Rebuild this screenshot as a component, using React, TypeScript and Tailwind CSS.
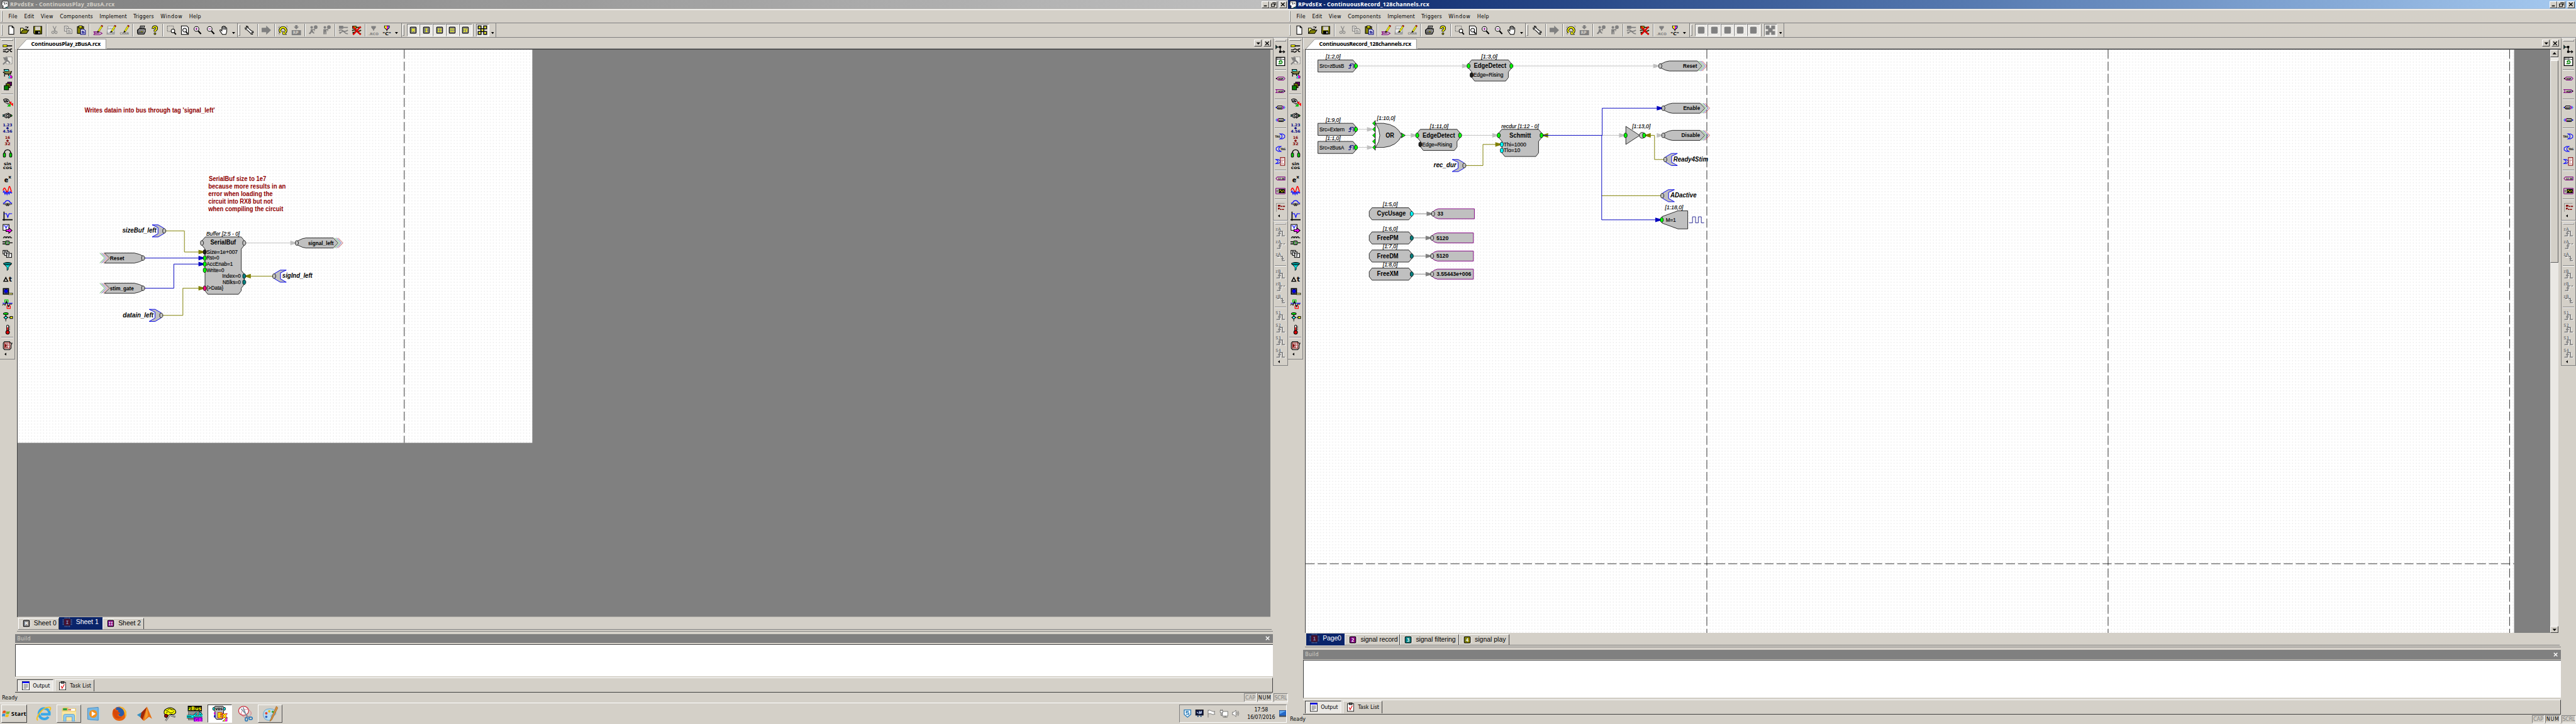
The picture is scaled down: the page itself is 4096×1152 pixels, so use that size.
import React from "react";

/* ---------- text ---------- */

const UI = '"DejaVu Sans Condensed", "DejaVu Sans", sans-serif';
const UI_BOLD = '"Noto Sans", "DejaVu Sans Condensed", sans-serif';
const ARIAL = '"Liberation Sans", Arial, sans-serif';
let ctx: CanvasRenderingContext2D | null = null;

function spacingFor(text: string, width: number, font: string) {
  if (!ctx) ctx = document.createElement("canvas").getContext("2d");
  if (!ctx) return 0;
  ctx.font = font;
  return (width - ctx.measureText(text).width) / text.length;
}

/* One line of interface text set to a given advance width. */
function Label({ t, w, size = 11, bold = false, arial = false, cls = "" }: { t: string; w: number; size?: number; bold?: boolean; arial?: boolean; cls?: string }) {
  const family = arial ? ARIAL : bold ? UI_BOLD : UI;
  const ls = spacingFor(t, w, `${bold ? "bold " : ""}${size}px ${family}`);
  return (
    <span
      className={`inline-block whitespace-pre leading-none ${bold ? "font-bold" : ""} ${cls}`}
      style={{ width: w + 2, marginRight: -2, letterSpacing: ls, fontSize: size, fontFamily: family }}
    >
      {t}
    </span>
  );
}

/* ---------- icons ---------- */

type Kids = { children?: React.ReactNode };

function Ico({ children, s = 20 }: Kids & { s?: number }) {
  return (
    <svg width={s} height={s} viewBox="0 0 20 20" fill="none" stroke="#000" strokeWidth="1.3" className="block shrink-0 overflow-visible">
      {children}
    </svg>
  );
}

function Tiny({ x, y, t, c = "#000", s = 7, w }: { x: number; y: number; t: string; c?: string; s?: number; w?: number }) {
  return (
    <text x={x} y={y} fontSize={s} fontWeight="bold" fill={c} stroke="none" textAnchor="middle" fontFamily='"DejaVu Sans", sans-serif' textLength={w} lengthAdjust="spacingAndGlyphs">
      {t}
    </text>
  );
}

const Pencil = () => (
  <g>
    <path d="M9 14 L10 11 L16 1.5 L18.5 3 L12 13 Z" fill="#ffff00" stroke="#404000" strokeWidth="0.8" />
    <path d="M16 1.5 L17 0 L19.6 1.6 L18.5 3 Z" fill="#900000" stroke="#900000" strokeWidth="0.8" />
    <path d="M9 14 L9.6 12.2 L11 13 Z" fill="#000" />
  </g>
);

const Balloon = ({ run }: { run?: boolean }) => (
  <g stroke="none" fill="#808080">
    <circle cx="7" cy="4.5" r="2.6" />
    <circle cx="15" cy="4" r="3.6" />
    <path d={run ? "M5 8 H10 L13 7 V9 L9 10 L10 13 L13 16 L11 17 L7 14 L4 18 L1 17 L5 12 Z" : "M4 8 H10 L13 7 V9 L10 10 V18 H8 V13 H7 V18 H4 Z"} />
    <path d="M13.5 8 L12 12" stroke="#808080" />
  </g>
);

const Devices = ({ c, y }: { c: string; y: string }) => (
  <g stroke={c} strokeWidth="2">
    <rect x="2" y="2" width="7" height="4.5" fill={y} strokeWidth="1.4" />
    <path d="M9 4.5 H19 M1 11 Q5 8 9 11 T19 10 M3 17 Q8 10 12 14 T19 17 M3 13 V17" />
  </g>
);

const H = {
  new: <path d="M5 1.5 H11.5 L15 5 V18 H5 Z M11.5 1.5 V5 H15" fill="#fff" />,
  open: (
    <g>
      <path d="M2 16.5 V6 H7 L8.5 8 H14 V10" fill="#ffff80" />
      <path d="M2 16.5 L6 10 H18.5 L14 16.5 Z" fill="#808000" />
      <path d="M11 4 Q14 1.5 16.5 5 M16.8 2.5 V5.5 H14" strokeWidth="1.2" />
    </g>
  ),
  save: (
    <g>
      <path d="M2 2.5 H18 V17.5 H3.5 L2 16 Z" fill="#808000" />
      <rect x="5" y="3" width="10" height="7" fill="#d4d0c8" stroke="none" />
      <rect x="5.5" y="12" width="9" height="5.5" fill="#000" />
      <rect x="11.5" y="13" width="2" height="3.5" fill="#fff" stroke="none" />
    </g>
  ),
  cut: (
    <g stroke="#808080">
      <path d="M6.5 2 L11.5 12 M13 2 L8.5 12" />
      <circle cx="6.5" cy="14.5" r="2.4" />
      <circle cx="12.5" cy="14.5" r="2.4" />
    </g>
  ),
  copy: (
    <g stroke="#808080">
      <path d="M3 2 H9 L11 4 V12 H3 Z" fill="#e4e1db" />
      <path d="M8 7 H15 L18 9.5 V17 H8 Z M10 10 H14 M10 12.3 H16 M10 14.6 H16 M5 5 H8 M5 7.5 H7" fill="#e4e1db" />
    </g>
  ),
  paste: (
    <g>
      <rect x="2.5" y="3" width="12.5" height="13.5" fill="#808000" />
      <rect x="5.5" y="1.5" width="6.5" height="4" fill="#ffff00" />
      <path d="M9 8 H15 L18.5 11 V18.5 H9 Z M11 11.5 H15 M11 13.6 H17 M11 15.8 H17" fill="#fff" stroke="#000080" />
    </g>
  ),
  hop: (
    <g>
      <path d="M1 13 H13 M1 19 H13 L18 16.5 L14 13.5 M1 13 L4 16 L1 19" stroke="#800080" />
      <Tiny x={8} y={18} t="HOP" s={4.5} c="#800080" />
      <Pencil />
    </g>
  ),
  devHop: (
    <g>
      <path d="M3 2 H16 V18 H1 Z" fill="#ececec" stroke="#a0a0a0" />
      <Tiny x={8} y={9} t="DEV" s={5} c="#a0a0a0" />
      <Tiny x={9} y={18} t="LOW" s={6} c="#808080" />
      <Pencil />
    </g>
  ),
  chan: (
    <g>
      <Tiny x={9.5} y={19} t="CHAN" s={6.5} c="#808080" w={18} />
      <Pencil />
    </g>
  ),
  print: (
    <g>
      <path d="M6 8 L8 1.5 H16 L14 8" fill="#fff" />
      <path d="M2 10 L5 7.5 H17.5 V13 L15 17.5 H3 L2 15 Z" fill="#c0c0c0" strokeWidth="1.6" />
      <path d="M2 11.5 H15 M3 14.5 H14.5 M8 3.8 H14 M7.5 6 H13" />
      <path d="M9 13 H12" stroke="#c0c000" />
    </g>
  ),
  help: (
    <g>
      <path d="M6.5 7.5 Q6.5 3 10.5 3 T14 6.5 Q14 9 10.5 10.5 V13" stroke="#000" strokeWidth="4.6" />
      <path d="M6.5 7 Q6.5 3 10.5 3 T14 6.5 Q14 9 10.5 10.5 V12.7" stroke="#ffff00" strokeWidth="2.2" />
      <circle cx="10.5" cy="17" r="1.8" fill="#ffff00" />
    </g>
  ),
  zoomSel: (
    <g>
      <rect x="1.5" y="1.5" width="12" height="11" strokeDasharray="2 1.3" stroke="#606060" />
      <circle cx="12.5" cy="11.5" r="3.6" fill="#fff" />
      <path d="M15 14.5 L18.5 18.5" strokeWidth="2.4" />
    </g>
  ),
  zoomPage: (
    <g>
      <path d="M3 1.5 H13.5 L17 5 V18.5 H3 Z" fill="#fff" />
      <circle cx="9.5" cy="10" r="3.8" fill="#e8e8e8" />
      <path d="M12 13 L15.5 17" strokeWidth="2.4" />
    </g>
  ),
  zoomIn: (
    <g>
      <circle cx="8" cy="7.5" r="4.8" fill="#fff" />
      <path d="M11.5 11.5 L17 17.5" strokeWidth="2.6" />
      <path d="M8 5 V10 M5.5 7.5 H10.5" stroke="#800080" />
    </g>
  ),
  zoomOut: (
    <g>
      <circle cx="8" cy="7.5" r="4.8" fill="#fff" />
      <path d="M11.5 11.5 L17 17.5" strokeWidth="2.6" />
      <path d="M5.5 7.5 H10.5" stroke="#800080" />
    </g>
  ),
  hand: <path d="M7 18.5 L2 11 Q2 8.5 4.5 10 L6 11.5 V4 Q7 2.5 8.2 4 V9 V2.5 Q9.5 1 10.7 2.5 V9 V3 Q12 1.8 13.2 3.5 V9.5 V5.5 Q14.5 4.5 15.7 6 V13 L14 18.5 Z" fill="#fff" />,
  wrench: <path d="M2.5 5 Q1.5 9 5.5 9 L12.5 15.5 Q13.5 19 17 18 L15 15.5 L16 14 L18.5 15 Q19 11.5 15 11.5 L8.5 6 Q8.5 1.5 4.5 2 L6.5 4.5 L5 6.5 Z" fill="#fff" />,
  goArrow: <path d="M2 6 H11 V2.5 L19 10 L11 17.5 V13.5 H2 Z M2 8 H11" fill="#808080" stroke="#808080" />,
  rotate: (
    <g>
      <path d="M5.5 14.5 A6 6 0 1 1 14.5 14.5" stroke="#000" strokeWidth="5" />
      <path d="M5.5 14.5 A6 6 0 1 1 14.5 14.5" stroke="#ffff00" strokeWidth="2.6" />
      <path d="M9.5 12 V18.5 H17 Z" fill="#ffff00" strokeWidth="1" />
      <path d="M1 5 L3 2 M17 1 L19 4 M1 16 L3 19" stroke="#606060" strokeDasharray="1.5 1" />
    </g>
  ),
  rp: (
    <g stroke="none" fill="#808080">
      <path d="M8 0 H12.5 V3 H15.5 L10.2 8.5 L5 3 H8 Z" />
      <rect x="1" y="10" width="18.5" height="10" />
      <Tiny x={9} y={18} t="RP" s={8} c="#d4d0c8" w={11} />
    </g>
  ),
  run: <Balloon run />,
  stand: <Balloon />,
  devOff: <Devices c="#808080" y="#808080" />,
  devX: (
    <g>
      <Devices c="#202000" y="#e0e000" />
      <path d="M3 3 L18 19 M18 3 L3 19" stroke="#e00000" strokeWidth="3" />
    </g>
  ),
  rco: (
    <g>
      <path d="M5.5 2 H14.5 V5 L11 9 V11 H9 V9 L5.5 5 Z" fill="#808080" stroke="none" />
      <Tiny x={10} y={19.5} t=".RCO" s={7} c="#808080" w={20} />
    </g>
  ),
  cc: (
    <g>
      <path d="M5.5 1.5 H15 V5 L10.2 9.5 L5.5 5 Z" fill="#ff00ff" />
      <path d="M6 2 H10 V8 L6 5 Z" fill="#ffff00" stroke="none" />
      <path d="M11.5 6 L14.5 2 V5 Z" fill="#00e0e0" stroke="none" />
      <path d="M10.2 9.5 V12" />
      <Tiny x={10} y={19.5} t={'"C"'} s={8.5} w={17} />
    </g>
  ),
};

function Chip({ t, body = "#808080", ink = "#ffff00", pin = "#fff", edge = "#000" }: { t?: string; body?: string; ink?: string; pin?: string; edge?: string }) {
  return (
    <Ico>
      <path d="M5.5 0.5 V19.5 M8.5 0.5 V19.5 M11.5 0.5 V19.5 M14.5 0.5 V19.5 M0.5 5.5 H19.5 M0.5 8.5 H19.5 M0.5 11.5 H19.5 M0.5 14.5 H19.5" stroke={pin} strokeWidth="1" />
      <rect x="4" y="3.8" width="12" height="12.4" rx="1.5" fill={body} stroke={edge} />
      {t && (
        <text x="10" y="13.4" fontSize="9.5" fontWeight="bold" fill={ink} stroke="none" textAnchor="middle" fontFamily='"DejaVu Sans Mono", monospace' textLength={t.length > 1 ? 9 : undefined} lengthAdjust="spacingAndGlyphs">
          {t}
        </text>
      )}
    </Ico>
  );
}

function MultiChip({ on }: { on: boolean }) {
  const spots = [[1, 1], [12, 1], [6.5, 6.5], [1, 12], [12, 12]];
  return (
    <Ico>
      {!on && <path d="M5 5 H15 V15 H5 Z" fill="#b0aea8" stroke="none" />}
      {spots.map(([x, y], i) => (
        <g key={i}>
          <rect x={x + 0.5} y={y + 0.5} width="6" height="6" fill="#808080" stroke={on ? "#000" : "#808080"} strokeWidth="1.6" />
          {on && <rect x={x + 2} y={y + 2} width="3" height="3" fill="#ffff00" stroke="none" />}
        </g>
      ))}
    </Ico>
  );
}

const tagOut = <path d="M9 5 H14 L18.5 8 V12 L14 15 H9 L13 12.5 V7.5 Z" stroke="#0000ff" />;

const V: React.ReactNode[] = [
  <g>
    <rect x="1" y="3" width="8" height="4" fill="#ffff00" strokeWidth="1" />
    <path d="M9 5 H19" strokeWidth="2" />
    <path d="M1 13 H6 Q9 9 12 13 H14 M1 16.5 H6 Q9 19 12 15 M19 11 Q14 11 15 14 T19 16.5" strokeWidth="1.7" />
  </g>,
  <g stroke="#808080">
    <path d="M7 2 H19 V16 H7 Z" fill="#e8e6e0" strokeDasharray="2 1" />
    <path d="M1 17 L10 8 M5 4 L15 14 M3 4 H9 V8 H5 Z" strokeWidth="2.6" />
  </g>,
  <g>
    <path d="M3 2 H12 L13 6 H4 Z" fill="#40e0e0" />
    <path d="M1 7 L6 11 H16 L18 5 M4 11 V16 M12 11 V15" fill="#808040" strokeWidth="1.6" />
    <path d="M12 19 H19 V15 L15 13 Z" fill="#ff00ff" strokeWidth="0.8" />
    <path d="M12 19 L15 13 V19 Z" fill="#00ffff" stroke="none" />
  </g>,
  <g>
    <path d="M9 0 V12 M12 0 V12 M15 0 V12 M18 2 V10 M1 8 V19 M5 8 V20" stroke="#fff" strokeWidth="1" />
    <rect x="10" y="2" width="8" height="7" fill="#800080" />
    <rect x="7" y="5" width="8" height="8" fill="#808000" />
    <rect x="3.5" y="9" width="8.5" height="8.5" fill="#008000" />
  </g>,
  <g>
    <path d="M2 3 Q8 0 12 4 L15 9 L10 11 L4 8 Z" fill="#fff" />
    <path d="M3 5 H11 M4 7 H12 M7 3 L10 9" />
    <path d="M8 10 L13 15 L15 12" fill="#888" stroke="#666" />
    <path d="M9 17 H16 V10 Z" fill="#00c000" stroke="none" />
    <path d="M14 9 L20 14 V10 M14 9 L18 8" stroke="#ff0000" strokeWidth="2" />
  </g>,
  <g>
    <path d="M1 7.5 L3.5 10 L1 12.5 Z" fill="#00a0a0" strokeWidth="1" />
    <path d="M3.5 8 L8 5.5 L10 8 L8 10 L10 13 L8 15 L3.5 12 Z" fill="#808080" strokeDasharray="2 0.6" />
    <path d="M11 5 L16 8 V12 L12 15 L11 13 L13 10 L11 8 Z" fill="#808080" />
    <path d="M17 7.5 L19.5 10 L17 12.5 Z" fill="#00c000" strokeWidth="1" />
  </g>,
  <g>
    <Tiny x={10} y={6} t="1.23" s={7.5} c="#000080" w={19} />
    <path d="M10 7.5 V12.5 M7.5 10 H12.5" stroke="#000080" strokeWidth="1.6" />
    <Tiny x={10} y={19} t="4.56" s={7.5} c="#000080" w={19} />
  </g>,
  <g>
    <Tiny x={10} y={6} t="16" s={7.5} c="#800000" w={10} />
    <path d="M10 7.5 V12.5 M7.5 10 H12.5" stroke="#800000" strokeWidth="1.6" />
    <Tiny x={10} y={19} t="32" s={7.5} c="#800000" w={12} />
  </g>,
  <g>
    <path d="M3.5 11 Q3.5 3 10 3 T16.5 11" strokeWidth="1.6" />
    <rect x="1.5" y="9.5" width="4.5" height="8" rx="1.6" fill="#00d000" />
    <rect x="14" y="9.5" width="4.5" height="8" rx="1.6" fill="#00d000" />
  </g>,
  <g>
    <Tiny x={10} y={9} t="sin" s={8.5} w={15} />
    <Tiny x={10} y={16.5} t="cos" s={8.5} w={18} />
  </g>,
  <g>
    <Tiny x={7.5} y={17} t="e" s={12} />
    <Tiny x={14.5} y={9.5} t="x" s={9} />
  </g>,
  <g>
    <path d="M1 13 L3 10 L5 16 L7 11 L9 17 L11 11 L13 16 L15 11 L17 14 L19 13" stroke="#0000ff" strokeWidth="1.6" />
    <path d="M1 9 Q3 2 5 5 T8 11 Q10 14 12 5 T16 6 L18 12" stroke="#ff0000" strokeWidth="1.8" />
  </g>,
  <g>
    <path d="M1 9 H4 Q6 4 10 4 T16 9 H19" stroke="#0000ff" strokeWidth="1.5" />
    <path d="M1 11 H4 L6 13 L7 9 L8.5 15 L10 9 L11.5 15 L13 9 L14 13 L16 11 H19" strokeWidth="1.1" />
  </g>,
  <g>
    <path d="M3 1 V19 M0 17 H20" strokeWidth="2" />
    <path d="M3 5 H8 L10.5 12 L13 5 H19" stroke="#0000ff" strokeWidth="1.5" />
  </g>,
  <g>
    <rect x="1" y="1.5" width="12" height="11.5" fill="#fff" />
    <path d="M2 4 H5 L7 9 L9 4 H12" stroke="#0000ff" />
    <path d="M7 11.5 H12.5 V8 L19 13.5 L12.5 19 V15.5 H7 Z" fill="#ff00ff" />
  </g>,
  <g>
    <path d="M1 3 H3 V1 H6 V3 H8 V1 H11 V3 H13 V1 H16 V3 H19" />
    <path d="M0 11 H6 M0 15 H6 M14 13 H20" strokeWidth="1.7" />
    <rect x="6" y="9" width="7.5" height="8" rx="2" fill="#808080" />
    <path d="M6 11 H8 M6 15 H8 M12 13 H14" stroke="#00e000" strokeWidth="2" />
  </g>,
  <g fill="#fff">
    <rect x="1" y="3" width="9" height="7" />
    <rect x="4" y="6" width="9" height="7" />
    <rect x="8" y="9" width="10" height="8" />
    <path d="M10 12 H15 M10 14.5 H14 M3 5 H6 M6 8 H9" />
  </g>,
  <g>
    <path d="M3 5 L9 12 V18 L11.5 16 V12 L17.5 5 Z" fill="#00e0e0" strokeWidth="1" />
    <ellipse cx="10" cy="4.5" rx="8" ry="2.5" fill="#008080" />
  </g>,
  <g>
    <path d="M2.5 14.5 L6.5 7 L10.5 14.5 Z" strokeWidth="1.8" />
    <Tiny x={15.5} y={15.5} t="t" s={13} />
  </g>,
  <g>
    <rect x="1.5" y="4" width="10.5" height="11" fill="#606080" strokeWidth="1.8" />
    <circle cx="7" cy="9" r="3.4" fill="#0000ff" stroke="#000080" />
    <rect x="12" y="13" width="8" height="3" fill="#ffff80" strokeWidth="1" />
  </g>,
  <g>
    <path d="M0 8 H20" stroke="#0000ff" />
    <rect x="4.5" y="1.5" width="6.5" height="4.5" stroke="#00d000" strokeWidth="1.5" />
    <rect x="9" y="13.5" width="6.5" height="5" stroke="#ff0000" strokeWidth="1.5" />
    <path d="M0 12 Q3 8 5 12 L8 4 L10 11 L12 15 L14 10 H19" strokeWidth="1.4" />
  </g>,
  <g>
    <path d="M6.5 3 V19 M2 11.5 H19" strokeDasharray="2.4 1" />
    <ellipse cx="6.5" cy="4" rx="4.8" ry="2" fill="#00e000" />
    <path d="M6.5 8 L10 11.5 L6.5 15 L3 11.5 Z" fill="#40ffff" />
    <rect x="15" y="9.5" width="5" height="4" fill="#ffff00" />
  </g>,
  <g>
    <rect x="8.3" y="1.5" width="3.8" height="12" rx="1.9" fill="#fff" />
    <path d="M10.2 6 V15" stroke="#e00000" strokeWidth="2.2" />
    <circle cx="10.2" cy="16" r="3.6" fill="#e00000" />
    <path d="M13 4 H15 M13 7 H15 M13 10 H15" strokeWidth="1" />
  </g>,
  <g>
    <path d="M4 2 H14 L16 5 L19 5 L17 9 V15 L14 18 H4 L1.5 15 V5 Z" />
    <rect x="4" y="4.5" width="10.5" height="10.5" fill="#fff" stroke="#800000" />
    <path d="M6 7 H12 M8 9 H13 M8 11 H12 M6 13 H11" stroke="#800000" strokeWidth="1" />
    <path d="M4.5 6 L9 10 L4.5 14 Z" fill="#800000" stroke="none" />
  </g>,
];

const HopIn = ({ c, rev }: { c: string; rev?: boolean }) => (
  <g>
    {rev ? <path d="M1 7 H15 L19 10 L15 13 H1 L3.5 10 Z" stroke={c} /> : <path d="M2 10 L6 7 H16 L19 10 L16 13 H6 Z" stroke={c} />}
    <circle cx={rev ? 18 : 2} cy="10" r="1.2" fill="#000" stroke="none" />
    <Tiny x={10.5} y={12.3} t="HOP" s={5.2} w={10} />
  </g>
);

const R1: React.ReactNode[] = [
  <g>
    <path d="M1 3 L3.5 6 L1 9 Z" fill="#00ffff" />
    <path d="M3 6 H9.5 V15.5 H18 M15.5 13 L18.5 15.5 L15.5 18" strokeWidth="1.5" />
    <rect x="8" y="4.5" width="3" height="3" fill="#000" />
    <rect x="8" y="14" width="3" height="3" fill="#000" />
  </g>,
  <g>
    <rect x="1.5" y="1.5" width="17" height="16.5" fill="#fff" strokeWidth="1.6" />
    <path d="M3 5.5 H17 M3 3.5 H13" strokeDasharray="2 1" />
    <path d="M6 14 H11 Q14 13 13 10 T9 9" stroke="#008000" strokeWidth="2" />
    <path d="M9.5 7 V13 L6 10 Z" fill="#008000" stroke="none" />
  </g>,
  null,
  <HopIn c="#800080" />,
  <HopIn c="#800080" rev />,
  null,
  <g>
    <path d="M2 10 L5 7 H13 L16 10 L13 13 H5 Z" />
    <path d="M14 7 L17 10 L14 13" stroke="#ff00ff" />
    <path d="M16 7 L19 10 L16 13" stroke="#0080ff" />
    <Tiny x={9} y={12} t="HOP" s={4.8} w={9} />
    <circle cx="1.5" cy="10" r="1.2" fill="#0000ff" stroke="none" />
  </g>,
  <g>
    <path d="M18 10 L15 7 H7 L4 10 L7 13 H15 Z" />
    <path d="M6 7 L3 10 L6 13" stroke="#ff00ff" />
    <path d="M4 7 L1 10 L4 13" stroke="#0080ff" />
    <Tiny x={11} y={12} t="HOP" s={4.8} w={9} />
    <circle cx="18.5" cy="10" r="1.2" fill="#0000ff" stroke="none" />
  </g>,
  null,
  <g>
    {tagOut}
    <Tiny x={4.5} y={12.4} t="TAG" s={6} w={10} />
  </g>,
  <g>
    <g transform="matrix(-1 0 0 1 20 0)">{tagOut}</g>
    <Tiny x={15} y={12.4} t="TAG" s={6} w={10} />
  </g>,
  <g>
    <path d="M1 6 H6 L10 9 V11 L6 14 H1 L5 11.5 V8.5 Z" stroke="#0000ff" />
    <rect x="10" y="2" width="8.5" height="15.5" fill="#fff" stroke="#800000" />
    <path d="M12 5 H16 M12 8 H17 M12 11 H15 M12 14 H17" stroke="#800000" strokeDasharray="1.5 1" />
  </g>,
  null,
  <g>
    <path d="M1 10 L4 7 H19 V13 H4 Z" stroke="#800080" />
    <Tiny x={11.5} y={12.3} t="12.34" s={5.4} w={13} />
  </g>,
  <g>
    <rect x="0.8" y="4.5" width="18.5" height="11" rx="1" stroke="#800080" />
    <rect x="6.5" y="6" width="12" height="8" fill="#000" stroke="none" />
    <path d="M7 11 L10 8 L13 12 L15 9 L18 11" stroke="#ffff00" strokeWidth="1.2" />
    <path d="M2 8 H5 M2 10 H5 M2 12 H5" strokeWidth="0.8" />
  </g>,
  null,
  <g>
    <path d="M2 18 V2 H18" stroke="#606060" strokeDasharray="1.2 1.2" />
    <path d="M6 9 V6 H9 V9 M11 8 H14 M15 8 H19 M6 14 V12 H9 M9 14 H12 M13 14 H17" stroke="#800000" strokeWidth="2" />
  </g>,
];

const Pulse = ({ t, k }: { t: string; k: number }) => (
  <g>
    {[["#fff", 1], ["#808080", 0]].map(([c, o]) => (
      <g key={c as string} transform={`translate(${o} ${o})`}>
        <Tiny x={5.8} y={7} t={t} s={8.5} c={c as string} w={11} />
        <path
          d={k === 0 ? "M2 18 H8 V9 H14 V18 H19 M5 13 H11" : k === 1 ? "M3 18 H9 V9 H14 M6 13 H12 M16 9 H19" : "M3 9 H8 M10 9 H14 V17 H19 M12 13 H17"}
          stroke={c as string}
          strokeWidth="2.2"
        />
      </g>
    ))}
  </g>
);

const R2: React.ReactNode[] = [
  <Pulse t="zA" k={0} />, <Pulse t="zA" k={1} />, <Pulse t="zA" k={2} />, null,
  <Pulse t="zB" k={0} />, <Pulse t="zB" k={1} />, <Pulse t="zB" k={2} />, null,
  <Pulse t="S1" k={0} />, <Pulse t="S2" k={0} />, <Pulse t="S3" k={0} />, <Pulse t="S4" k={0} />,
];

/* ---------- bars ---------- */

function Btn({ children }: Kids) {
  return <div className="flex h-[26px] w-[26px] shrink-0 items-center justify-center">{children}</div>;
}

function Sunk({ children }: Kids) {
  return <div className="flex h-[26px] w-[26px] shrink-0 items-center justify-center border border-t-[#808080] border-r-white border-b-white border-l-[#808080] bg-[#eae8e4]">{children}</div>;
}

const VSep = () => (
  <div className="flex w-2 shrink-0 justify-center">
    <div className="h-[25px] w-[2px] border-r border-l border-l-[#808080] border-r-white" />
  </div>
);

const Grip = () => <div className="mr-[5px] ml-[2px] h-[22px] w-[3px] shrink-0 border border-t-white border-r-[#808080] border-b-[#808080] border-l-white" />;

const Drop = () => (
  <div className="flex h-[26px] w-[13px] shrink-0 items-end justify-center pb-[5px]">
    <svg width="6" height="4" viewBox="0 0 6 4"><path d="M0 0 H6 L3 4 Z" /></svg>
  </div>
);

function Band({ children }: Kids) {
  return <div className="flex h-7 shrink-0 items-center border-r border-[#808080]">{children}</div>;
}

function IconRow({ names }: { names: (keyof typeof H)[] }) {
  return <>{names.map((n) => <Btn key={n}><Ico>{H[n]}</Ico></Btn>)}</>;
}

function ToolRow({ live }: { live: boolean }) {
  return (
    <div className="flex h-[30px] shrink-0 items-center border-t border-b-2 border-t-[#808080] border-b-[#808080]">
      <Band>
        <Grip />
        <IconRow names={["new", "open", "save"]} />
        <VSep />
        <IconRow names={["cut", "copy", "paste"]} />
        <VSep />
        <IconRow names={["hop", "devHop", "chan"]} />
        <VSep />
        <IconRow names={["print", "help"]} />
        <VSep />
        <IconRow names={["zoomSel", "zoomPage", "zoomIn", "zoomOut", "hand"]} />
        <Drop />
      </Band>
      <Band>
        <Grip />
        <IconRow names={["wrench"]} />
        <VSep />
        <IconRow names={["goArrow"]} />
        <VSep />
        <IconRow names={["rotate", "rp"]} />
        <VSep />
        <IconRow names={["run", "stand"]} />
        <VSep />
        <IconRow names={["devOff", "devX"]} />
        <VSep />
        <IconRow names={["rco", "cc"]} />
        <Drop />
        <div className="w-[2px]" />
      </Band>
      <Band>
        <Grip />
        {["M", "I", "II", "III", "IV"].map((t) => (
          <Sunk key={t}>{live ? <Chip t={t} /> : <Chip edge="#808080" />}</Sunk>
        ))}
        <VSep />
        <Sunk><MultiChip on={live} /></Sunk>
        <Drop />
      </Band>
    </div>
  );
}

const HGrip = () => <div className="mx-[2px] my-[3px] h-[3px] shrink-0 border border-t-white border-r-[#808080] border-b-[#808080] border-l-white" />;

function IconColumn({ items }: { items: React.ReactNode[] }) {
  return (
    <>
      {items.map((n, i) =>
        n ? (
          <div key={i} className="flex h-[25px] shrink-0 items-center justify-center"><Ico>{n}</Ico></div>
        ) : (
          <div key={i} className="flex h-2 shrink-0 items-center"><div className="mx-[2px] h-[2px] grow border-t border-b border-t-[#808080] border-b-white" /></div>
        ),
      )}
      <div className="flex h-[9px] shrink-0 items-center pl-[9px]">
        <svg width="4" height="6" viewBox="0 0 4 6"><path d="M4 0 V6 L0 3 Z" /></svg>
      </div>
    </>
  );
}

function LeftTools() {
  const items = [...V.slice(0, 4), null, ...V.slice(4, 23), null, V[23]];
  return (
    <div className="flex w-[30px] shrink-0 flex-col">
      <div className="flex h-[640px] flex-col border-r-2 border-b border-[#808080]">
        <HGrip />
        <IconColumn items={items} />
      </div>
      <div className="w-[30px] grow" />
    </div>
  );
}

function RightTools() {
  return (
    <div className="flex w-[30px] shrink-0 flex-col">
      <div className="flex h-[364px] flex-col border border-t-white border-r-[#808080] border-b-[#808080] border-l-[#808080]">
        <HGrip />
        <IconColumn items={R1} />
      </div>
      <div className="flex h-[289px] flex-col border border-t-white border-r-[#808080] border-b-[#808080] border-l-[#808080]">
        <HGrip />
        <IconColumn items={R2} />
      </div>
    </div>
  );
}

/* ---------- window frame ---------- */

function RaisedKey({ children, cls = "" }: Kids & { cls?: string }) {
  return (
    <div className={`flex h-[14px] items-center justify-center border border-t-white border-r-[#404040] border-b-[#404040] border-l-white bg-[#d4d0c8] ${cls}`}>
      <svg width="12" height="10" viewBox="0 0 12 10" fill="none" stroke="#000" strokeWidth="1.6">{children}</svg>
    </div>
  );
}

const Cross = () => <path d="M2.5 1.5 L9.5 8.5 M9.5 1.5 L2.5 8.5" />;
const Down = () => <path d="M2 3 H10 L6 7.5 Z" fill="#000" stroke="none" />;

const MENU: [string, number][] = [["File", 18], ["Edit", 20], ["View", 25], ["Components", 66], ["Implement", 54], ["Triggers", 41], ["Window", 44], ["Help", 24]];

function Frame({ title, tw, tab, tabW, live, active, children }: Kids & { title: string; tw: number; tab: string; tabW: number; live: boolean; active: boolean }) {
  return (
    <>
      <div className={`flex h-[18px] shrink-0 items-center pr-[2px] pl-[2px] ${active ? "bg-linear-to-r from-[#0a246a] to-[#a6caf0] text-white" : "bg-linear-to-r from-[#808080] to-[#c0c0c0] text-[#d4d0c8]"}`}>
        <svg width="16" height="16" viewBox="0 0 16 16" className="mr-[2px]">
          <path d="M2 1 H13 L14 3 V10 L12 13 H9 V15 H3 L4 11 L1 8 Z" fill="#fff" stroke="#000" />
          <path d="M4 4 H7 V8 M9 4 L12 7 M9 7 L12 4" stroke="#000" fill="none" />
          <path d="M8 14 L14 15" stroke="#008080" />
        </svg>
        <Label t={title} w={tw} bold />
        <div className="grow" />
        <RaisedKey cls="w-[15px]"><path d="M2 8 H8" strokeWidth="2" /></RaisedKey>
        <RaisedKey cls="w-4"><path d="M4 1.5 H10 V6 H8 M2 4 H8 V9 H2 Z" strokeWidth="1.3" /></RaisedKey>
        <RaisedKey cls="ml-[3px] w-4"><Cross /></RaisedKey>
      </div>
      <div className="mt-px flex h-[26px] shrink-0 items-center border-t border-white">
        <Grip />
        <div className="flex gap-[13px] pl-[7px]">
          {MENU.map(([t, w]) => <Label key={t} t={t} w={w} />)}
        </div>
      </div>
      <ToolRow live={live} />
      <div className="flex min-h-0 grow">
        <LeftTools />
        <div className="flex min-w-0 grow flex-col">
          <div className="flex h-[23px] shrink-0 items-end border-l border-white">
            <svg width={tabW} height="22" viewBox={`0 0 ${tabW} 22`} className="ml-1 block overflow-visible">
              <path d={`M0 21.5 L17 3 Q18 1.5 20 1.5 H${tabW - 1.5} V22 H0 Z`} fill="#fff" stroke="#808080" />
              <text x="27" y="15" fontSize="11" fontWeight="bold" fontFamily={UI_BOLD} textLength={tabW - 39} lengthAdjust="spacing">{tab}</text>
            </svg>
            <div className="flex h-full grow items-center justify-end gap-[3px] border-b border-[#808080] pr-1">
              <RaisedKey cls="w-[15px]"><Down /></RaisedKey>
              <RaisedKey cls="w-[15px]"><Cross /></RaisedKey>
            </div>
          </div>
          {children}
        </div>
        <RightTools />
      </div>
    </>
  );
}

type SheetTab = { t: string; w: number; tw: number; n: string; body: string; ink: string; on?: boolean };

function SheetTabs({ tabs }: { tabs: SheetTab[] }) {
  return (
    <div className="flex h-[29px] shrink-0 items-start border-b border-[#808080] px-[2px]">
      <div className="flex h-[25px] grow border-b border-[#808080] pt-[2px]">
        {tabs.map((s) => (
          <div
            key={s.t}
            style={{ width: s.w }}
            className={`flex shrink-0 items-center ${s.on ? "-mt-px h-6 gap-[7px] bg-[#0a246a] pb-1 pl-[6px] text-white" : "h-[22px] gap-[5px] border-t border-r-2 border-l border-t-white border-r-[#404040] border-l-white pl-[5px]"}`}
          >
            <Chip t={s.n} body={s.body} ink={s.ink} edge={s.on ? "#301028" : "#000"} pin={s.on ? "#8090b8" : "#fff"} />
            <Label t={s.t} w={s.tw} size={13} arial />
          </div>
        ))}
      </div>
    </div>
  );
}

function OutputPane({ boxH }: { boxH: string }) {
  return (
    <div className="mt-[5px] flex shrink-0 flex-col">
      <div className="flex h-[18px] items-center justify-between bg-[#808080] pr-[6px] pl-1 text-[#d4d0c8]">
        <Label t="Build" w={27} />
        <svg width="9" height="9" viewBox="0 0 9 9" stroke="#fff" strokeWidth="1.7"><path d="M1 1 L8 8 M8 1 L1 8" /></svg>
      </div>
      <div className={`mt-[2px] border-t-2 border-b border-l-2 border-t-[#404040] border-b-[#d4d0c8] border-l-[#404040] bg-white ${boxH}`} />
      <div className="mt-[2px] flex h-[30px] items-start border-t border-r border-b-2 border-t-white border-r-[#404040] border-b-[#404040] pt-[2px] pl-1">
        <div className="flex h-6 w-[72px] items-center border-t-2 border-r-2 border-l-2 border-t-[#404040] border-r-white border-l-[#404040] bg-[#eae8e4] pl-2">
          <svg width="15" height="18" viewBox="0 0 15 18">
            <rect x="0.7" y="0.7" width="13.6" height="16.6" fill="#fff" stroke="#000" />
            <rect x="0.7" y="0.7" width="13.6" height="3" fill="#0000ff" />
            <path d="M3 6.5 H12 M3 9 H12 M3 11.5 H12 M3 14 H9" stroke="#404040" />
          </svg>
          <Label t="Output" w={34} cls="ml-[7px]" />
        </div>
        <div className="ml-[3px] flex h-6 w-[79px] items-center border-t border-r-2 border-l-2 border-t-white border-r-[#404040] border-l-white pl-[7px]">
          <svg width="14" height="18" viewBox="0 0 14 18">
            <rect x="0.7" y="2.2" width="12.6" height="15" fill="#fff" stroke="#000" />
            <rect x="4" y="0.5" width="6" height="3.5" fill="#606060" stroke="#000" />
            <path d="M4 9.5 L6 14 L10.5 6" fill="none" stroke="#e00000" strokeWidth="1.5" />
          </svg>
          <Label t="Task List" w={42} cls="ml-2" />
        </div>
      </div>
    </div>
  );
}

function StatusRow() {
  const cell = "flex h-[17px] items-center justify-center border border-t-[#808080] border-r-white border-b-white border-l-[#808080]";
  return (
    <div className="flex h-[19px] shrink-0 items-center justify-between pl-1">
      <Label t="Ready" w={31} />
      <div className="flex gap-[2px]">
        <div className={`${cell} w-6 text-[#808080]`}><Label t="CAP" w={20} /></div>
        <div className={`${cell} w-[30px]`}><Label t="NUM" w={26} /></div>
        <div className={`${cell} w-[29px] text-[#808080]`}><Label t="SCRL" w={25} /></div>
      </div>
    </div>
  );
}

/* ---------- circuit drawing ---------- */

const G = "#c0c0c0", GREEN = "#00ff00", OLIVE = "#808000", BLUE = "#0000c0", TEAL = "#008080", CYAN = "#00ffff", DARK = "#202020";

function S({ x, x2, y, t, b, i, s = 11, c = "#000" }: { x: number; x2: number; y: number; t: string; b?: boolean; i?: boolean; s?: number; c?: string }) {
  return (
    <text
      x={x}
      y={y}
      fontSize={s}
      fill={c}
      stroke={b ? "none" : c}
      strokeWidth={b ? 0 : 0.2}
      fontFamily={ARIAL}
      fontWeight={b ? "bold" : "normal"}
      fontStyle={i ? "italic" : "normal"}
      textLength={x2 - x}
      lengthAdjust="spacingAndGlyphs"
    >
      {t}
    </text>
  );
}

const Port = ({ x, y, c = G }: { x: number; y: number; c?: string }) => (
  <path d={`M${x - 3} ${y - 2.5} L${x - 1.5} ${y - 4.5} H${x + 1} L${x + 3} ${y - 2} V${y + 2} L${x + 1} ${y + 4.5} H${x - 1.5} L${x - 3} ${y + 2.5} Z`} fill={c} stroke="#000" />
);

function Wire({ p, c, head }: { p: string; c: string; head?: [number, number, 1 | -1] }) {
  return (
    <g>
      <polyline points={p} fill="none" stroke={c} strokeWidth="1.2" />
      {head && <path d={`M${head[0]} ${head[1] - 1.5} V${head[1] + 1.5} L${head[0] - 10 * head[2]} ${head[1] + 4.5} V${head[1] - 4.5} Z`} fill={c} />}
    </g>
  );
}

function Tag({ x, y, left, t, t1, t2 }: { x: number; y: number; left?: boolean; t: string; t1: number; t2: number }) {
  return (
    <g>
      <g transform={`translate(${x} ${y}) scale(${left ? -1 : 1} 1)`}>
        <path d="M-27 -12 H-15 L-4 -5.5 V5.5 L-15 12 H-27 L-15.5 5.5 V-6.5 Z" fill={G} stroke="#0000e8" strokeWidth="1.2" />
      </g>
      <Port x={left ? x + 3 : x - 3} y={y} />
      <S x={t1} x2={t2} y={y + 3.5} t={t} b i s={13} c="#000" />
    </g>
  );
}

const CHEV = ["#109010", "#000080", "#b02020"];

function HopOut({ x, f1, f2, y, t, t1, t2 }: { x: number; f1: number; f2: number; y: number; t: string; t1: number; t2: number }) {
  return (
    <g>
      <path d={`M${x} ${y - 3.5} L${f1 - 7} ${y - 8.5} L${f1} ${y - 10} H${f2} L${f2 + 9.5} ${y} L${f2} ${y + 10} H${f1} L${f1 - 7} ${y + 8.5} L${x} ${y + 3.5} Z`} fill={G} stroke="#000" />
      {CHEV.map((c, i) => <path key={c} d={`M${f2 + 3 + i * 3.3} ${y - 10} l9.5 10 l-9.5 10`} fill="none" stroke={c} strokeWidth="0.9" />)}
      <Port x={x} y={y} />
      <S x={t1} x2={t2} y={y + 3.7} t={t} b />
    </g>
  );
}

function HopInNode({ y, t, t2 }: { y: number; t: string; t2: number }) {
  return (
    <g>
      {CHEV.map((c, i) => <path key={c} d={`M${198.5 + i * 3.3} ${y - 10} l9.5 10 l-9.5 10`} fill="none" stroke={c} strokeWidth="0.9" />)}
      <path d={`M207.5 ${y - 10} H267 L277 ${y - 7.5} L285 ${y - 3.5} V${y + 3.5} L277 ${y + 7.5} L267 ${y + 10} H207.5 L217.5 ${y} Z`} fill={G} stroke="#000" />
      <Port x={284.5} y={y} />
      <S x={218.5} x2={t2} y={y + 3.7} t={t} b />
    </g>
  );
}

/* Component body whose header row holds a pair of ports, y being that row's centre. */
function Block({ l, r, y, bottom }: { l: number; r: number; y: number; bottom: number }) {
  return (
    <path
      d={`M${l + 6} ${y - 12} H${r - 6} L${r} ${y - 4.5} V${y + 4.5} L${r - 6} ${y + 12} V${bottom - 7} L${r - 11.5} ${bottom} H${l + 12} L${l + 6.5} ${bottom - 7} V${y + 12} L${l} ${y + 4.5} V${y - 4.5} Z`}
      fill={G}
      stroke="#000"
    />
  );
}

function Edge({ x, y, t }: { x: number; y: number; t: string }) {
  return (
    <g>
      <Block l={x} r={x + 85} y={y} bottom={y + 30} />
      <Port x={x} y={y} c={GREEN} />
      <Port x={x + 85} y={y} c={GREEN} />
      <Port x={x + 6} y={y + 18} c={DARK} />
      <S x={x + 10.5} x2={x + 75} y={y + 4} t="EdgeDetect" b s={13} />
      <S x={x + 9.5} x2={x + 69} y={y + 21.5} t="Edge=Rising" />
      <S x={x + 25} x2={x + 25 + t.length * 4.6} y={y - 14.5} t={t} i />
    </g>
  );
}

function Src({ y, t, n, t2 }: { y: number; t: string; n: string; t2: number }) {
  return (
    <g>
      <path d={`M2619.5 ${y - 12} H2689 L2695 ${y - 5} V${y + 5} L2689 ${y + 12} H2619.5 Z`} fill={G} stroke="#000" />
      <path d={`M2680 ${y + 4.5} H2684 V${y - 4} H2690 V${y + 4.5} M2681.5 ${y - 0.5} H2686.5 L2684 ${y - 3} Z`} fill="none" stroke="#000080" strokeWidth="1.2" />
      <Port x={2695} y={y} c={GREEN} />
      <S x={2622.5} x2={t2} y={y + 3.7} t={t} />
      <S x={2635} x2={2664.5} y={y - 15} t={n} i />
    </g>
  );
}

function Meter({ y, t, t2, n, v, v2, c, dx = 0 }: { y: number; t: string; t2: number; n: string; v: string; v2: number; c: string; dx?: number }) {
  return (
    <g>
      <Wire p={`2809,${y} 2836,${y}`} c="#808080" head={[2843.5 + dx, y, 1]} />
      <path d={`M2727 ${y - 12} H2800 L2806 ${y - 5} V${y + 5} L2800 ${y + 12} H2727 L2721.5 ${y + 5} V${y - 5} Z`} fill={G} stroke="#000" />
      <Port x={2806} y={y} c={c} />
      <S x={2737} x2={t2} y={y + 4} t={t} b s={13} />
      <S x={2748.5} x2={2778} y={y - 15} t={n} i />
      <path d={`M${2846 + dx} ${y - 4} L${2851 + dx} ${y - 8} L${2857 + dx} ${y - 10} H${2928.5 + dx} V${y + 10} H${2857 + dx} L${2851 + dx} ${y + 8} L${2846 + dx} ${y + 4} Z`} fill={G} stroke="#800080" strokeWidth="1.2" />
      <Port x={2846.5 + dx} y={y} />
      <S x={2855 + dx} x2={v2} y={y + 3.7} t={v} b />
    </g>
  );
}

function Dots({ id }: { id: string }) {
  return (
    <defs>
      <pattern id={id} width="6" height="6" patternUnits="userSpaceOnUse">
        <rect width="6" height="6" fill="#fff" />
        <rect x="2" y="3" width="1.25" height="1.25" fill="#cfcfcf" />
      </pattern>
    </defs>
  );
}

const Dashed = ({ d }: { d: string }) => <path d={d} stroke="#000" strokeDasharray="18 6" fill="none" />;

function PlayCircuit() {
  return (
    <svg width="2490" height="1128" viewBox="35 99 2490 1128" className="block">
      <Dots id="dotsA" />
      <rect x="35" y="99" width="2490" height="1128" fill="#808080" />
      <rect x="35" y="99" width="1023" height="782" fill="url(#dotsA)" />
      <Dashed d="M803.5 99 V881" />
      <S x={168} x2={427} y={224} t="Writes datain into bus through tag 'signal_left'" b s={13} c="#900000" />
      <S x={415} x2={529} y={360} t="SerialBuf size to 1e7" b s={13} c="#900000" />
      <S x={414} x2={568} y={375} t="because more results in an" b s={13} c="#900000" />
      <S x={414} x2={542} y={390} t="error when loading the" b s={13} c="#900000" />
      <S x={414} x2={542} y={405} t="circuit into RX8 but not" b s={13} c="#900000" />
      <S x={414} x2={563} y={420} t="when compiling the circuit" b s={13} c="#900000" />
      <Wire p="329,459.5 366.5,459.5 366.5,501.5 396,501.5" c={OLIVE} head={[404.5, 501.5, 1]} />
      <Wire p="287,513.5 396,513.5" c={BLUE} head={[404.5, 513.5, 1]} />
      <Wire p="287,573.5 345.5,573.5 345.5,525.5 396,525.5" c={BLUE} head={[404.5, 525.5, 1]} />
      <Wire p="323,627.5 363.5,627.5 363.5,573.5 396,573.5" c={OLIVE} head={[404.5, 573.5, 1]} />
      <Wire p="543,549.5 498,549.5" c={OLIVE} head={[488.5, 549.5, -1]} />
      <Wire p="488,483.5 580,483.5" c={G} head={[587, 483.5, 1]} />
      <Tag x={329.5} y={459.5} t="sizeBuf_left" t1={243} t2={311} />
      <Tag x={323.5} y={627.5} t="datain_left" t1={244} t2={305} />
      <Tag x={542} y={549.5} left t="sigInd_left" t1={561} t2={621} />
      <HopInNode y={513.5} t="Reset" t2={247} />
      <HopInNode y={573.5} t="stim_gate" t2={266} />
      <HopOut x={590} f1={608} f2={662.5} y={483.5} t="signal_left" t1={612.5} t2={663} />
      <path d="M408 471.5 H479.5 L485.5 479 V488 L479.5 495.5 V538 L485.5 545.5 V566 L479.5 573.5 V578.5 L474 585.5 H413 L407.5 578.5 V495.5 L401.5 488 V479 Z" fill={G} stroke="#000" />
      <Port x={401.5} y={483.5} />
      <Port x={485.5} y={483.5} />
      <Port x={407} y={501.5} c={DARK} />
      <Port x={407} y={513.5} c={GREEN} />
      <Port x={407} y={525.5} c={GREEN} />
      <Port x={407} y={537.5} c={GREEN} />
      <Port x={407} y={573.5} c="#ff0080" />
      <Port x={485.5} y={549.5} c={TEAL} />
      <Port x={485.5} y={561.5} c={TEAL} />
      <S x={410} x2={476.5} y={469} t="Buffer [2:5 - 0]" i />
      <S x={418} x2={469} y={487} t="SerialBuf" b s={13} />
      <S x={410.5} x2={472.5} y={505} t="Size=1e+007" />
      <S x={410.5} x2={435.5} y={517} t="Rst=0" />
      <S x={410.5} x2={463} y={529} t="AccEnab=1" />
      <S x={410.5} x2={445.5} y={541} t="Write=0" />
      <S x={441.5} x2={478.5} y={553} t="Index=0" />
      <S x={442.5} x2={478.5} y={565} t="NBlks=0" />
      <S x={410.5} x2={444} y={577} t="{>Data}" />
    </svg>
  );
}

function RecordCircuit() {
  return (
    <svg width="2474" height="1160" viewBox="2595 99 2474 1160" className="block">
      <Dots id="dotsB" />
      <rect x="2595" y="99" width="2474" height="1160" fill="#808080" />
      <rect x="2595" y="99" width="2402" height="1160" fill="url(#dotsB)" />
      <Dashed d="M3392.5 99 V1259 M4190 99 V1259 M4988 99 V1259 M2595 1121.5 H4997" />
      <Wire p="2698,131.5 2908,131.5" c={G} head={[2916, 131.5, 1]} />
      <Wire p="3007,131.5 3288,131.5" c={G} head={[3296, 131.5, 1]} />
      <Wire p="2698,257.5 2718,257.5" c={G} head={[2727, 257.5, 1]} />
      <Wire p="2698,293.5 2718,293.5" c={G} head={[2727, 293.5, 1]} />
      <Wire p="2793,269.5 2806,269.5" c={G} head={[2814, 269.5, 1]} />
      <Wire p="2905,269.5 2968,269.5" c={G} head={[2976, 269.5, 1]} />
      <Wire p="2913,329.5 2947.5,329.5 2947.5,287.5 2974,287.5" c={OLIVE} head={[2982, 287.5, 1]} />
      <Wire p="3184,269.5 3220,269.5" c={G} head={[3228, 269.5, 1]} />
      <Wire p="3307,317.5 3288.5,317.5 3288.5,269.5 3280,269.5" c={OLIVE} head={[3271, 269.5, -1]} />
      <Wire p="3293,269.5 3295,269.5" c={G} head={[3303, 269.5, 1]} />
      <Wire p="3302,389.5 3183.5,389.5" c={OLIVE} head={[3067, 269.5, -1]} />
      <Wire p="3067,269.5 3184.5,269.5 3184.5,215.5 3294,215.5" c={BLUE} head={[3303, 215.5, 1]} />
      <Wire p="3183.5,269.5 3183.5,437.5 3292,437.5" c={BLUE} head={[3300, 437.5, 1]} />
      <Src y={131.5} t="Src=zBusB" n="[1:2,0]" t2={2671.5} />
      <Src y={257.5} t="Src=Extern" n="[1:9,0]" t2={2672.5} />
      <Src y={293.5} t="Src=zBusA" n="[1:1,0]" t2={2671.5} />
      <Edge x={2919} y={131.5} t="[1:3,0]" />
      <Edge x={2817} y={269.5} t="[1:11,0]" />
      <path d="M2734 245.5 H2750 Q2777 248 2786 269.5 Q2777 291 2750 293.5 H2734 Q2751 269.5 2734 245.5 Z" fill={G} stroke="#000" />
      {[245.5, 257.5, 269.5, 281.5, 293.5].map((y) => <path key={y} d={`M2733 ${y - 5} V${y + 5} L2728 ${y} Z`} fill={GREEN} stroke="#000" strokeWidth="0.8" />)}
      <path d="M2733.5 239.5 V299.5" stroke="#000" />
      <path d="M2785 264.5 L2793 269.5 L2785 274.5 L2787 269.5 Z" fill={GREEN} stroke="#000" />
      <S x={2754} x2={2771} y={274} t="OR" b s={13} />
      <S x={2737} x2={2773} y={239} t="[1:10,0]" i />
      <Block l={2979} r={3064} y={269.5} bottom={311.5} />
      <Port x={2979} y={269.5} c={GREEN} />
      <Port x={3064} y={269.5} c={GREEN} />
      <Port x={2985} y={287.5} c={CYAN} />
      <Port x={2985} y={299.5} c={CYAN} />
      <S x={2984} x2={3058.5} y={255} t="recdur [1:12 - 0]" i />
      <S x={3000} x2={3043} y={273.5} t="Schmitt" b s={13} />
      <S x={2988.5} x2={3033.5} y={291} t="Thi=1000" />
      <S x={2988.5} x2={3021.5} y={303} t="Tlo=10" />
      <Tag x={2913.5} y={329.5} t="rec_dur" t1={2849.5} t2={2894.5} />
      <path d="M3231.5 251.5 V287.5 L3259 269.5 Z" fill={G} stroke="#000" />
      <circle cx="3264" cy="269.5" r="5.8" fill={G} stroke="#000" />
      <Port x={3231} y={269.5} c={GREEN} />
      <Port x={3268} y={269.5} c={GREEN} />
      <S x={3244} x2={3280.5} y={255} t="[1:13,0]" i />
      <HopOut x={3300} f1={3318} f2={3373.5} y={131.5} t="Reset" t1={3345} t2={3373} />
      <HopOut x={3306} f1={3324} f2={3379} y={215.5} t="Enable" t1={3345.5} t2={3379} />
      <HopOut x={3306} f1={3324} f2={3379} y={269.5} t="Disable" t1={3342} t2={3379} />
      <Tag x={3307} y={317.5} left t="Ready4Stim" t1={3326} t2={3395} />
      <Tag x={3301} y={389.5} left t="ADactive" t1={3320} t2={3372} />
      <path d="M3303.5 431 L3335 419.5 H3354.5 V455.5 H3335 L3303.5 444 Z" fill={G} stroke="#000" />
      <Port x={3303} y={437.5} c={GREEN} />
      <S x={3311} x2={3331} y={441} t="M=1" />
      <S x={3309.5} x2={3345.5} y={417} t="[1:18,0]" i />
      <path d="M3357 443.5 H3364 V431.5 H3370 V443.5 H3375.5 V431.5 H3381.5 V443.5 H3387" fill="none" stroke="#000080" />
      <Meter y={425.5} t="CycUsage" t2={2794} n="[1:5,0]" v="33" v2={2868.5} c={CYAN} dx={2} />
      <Meter y={473.5} t="FreePM" t2={2779.5} n="[1:6,0]" v="5120" v2={2879} c={TEAL} />
      <Meter y={509.5} t="FreeDM" t2={2779.5} n="[1:7,0]" v="5120" v2={2879} c={TEAL} />
      <Meter y={545.5} t="FreeXM" t2={2779.5} n="[1:8,0]" v="3.55443e+006" v2={2924} c={TEAL} />
    </svg>
  );
}

/* ---------- taskbar ---------- */

function App32({ children, mode = "flat" }: Kids & { mode?: "flat" | "up" | "down" }) {
  const skin = {
    flat: "",
    up: "border-t border-l border-r-2 border-b-2 border-t-white border-l-white border-r-[#505050] border-b-[#505050]",
    down: "border-t-2 border-l-2 border-r border-b border-t-[#404040] border-l-[#404040] border-r-white border-b-white bg-white",
  }[mode];
  return (
    <div className={`flex h-[37px] w-12 shrink-0 items-center justify-center ${skin}`}>
      <svg width="32" height="32" viewBox="0 0 32 32" fill="none" className="block">{children}</svg>
    </div>
  );
}

function Taskbar() {
  return (
    <div className="flex h-[43px] shrink-0 items-center border-t border-white pl-[2px]">
      <div className="flex h-[37px] w-[52px] items-center gap-px border-t border-r-2 border-b-2 border-l border-t-white border-r-[#404040] border-b-[#404040] border-l-white pl-px">
        <svg width="17" height="17" viewBox="0 0 17 17">
          <path d="M2 3 Q5 1 8 3 L7 8 Q4 6 1 8 Z" fill="#e8541c" />
          <path d="M9 3.4 Q12 5 16 3 L14.5 8 Q11 10 8 8.3 Z" fill="#7cb82f" />
          <path d="M0.7 9 Q4 7 6.8 9 L5.6 14 Q3 12 0 14 Z" fill="#3a8fd8" />
          <path d="M7.8 9.4 Q11 11 14 9 L13 14 Q10 16 6.5 14.5 Z" fill="#f7c21e" />
        </svg>
        <Label t="Start" w={30} bold size={12} />
      </div>
      <div className="ml-[9px] flex gap-[2px]">
        <App32>
          <path d="M25 22 A10.5 10.5 0 1 1 27 17 H10" stroke="#38a8e8" strokeWidth="5" />
          <path d="M4 29 Q-1 26 8 14 T28 3 Q31 5 27 10" stroke="#f4c020" strokeWidth="2.4" />
        </App32>
        <App32 mode="up">
          <path d="M2 6 L5 3 H14 L16 5 H30 V29 H2 Z" fill="#e8c868" />
          <path d="M4 5 H12 V9 H4 Z" fill="#30a040" />
          <path d="M14 6 H28 V10 H14 Z" fill="#fff" />
          <path d="M14 7 H20 V9 H14 Z" fill="#d04020" />
          <path d="M2 11 H30 V29 H2 Z" fill="#fae6a0" />
          <path d="M5 31 V20 Q5 17 8 17 H24 Q27 17 27 20 V31 H22 V22 H10 V31 Z" fill="#90cbee" stroke="#5098c8" />
        </App32>
        <App32>
          <path d="M8 3 L27 5 V28 L8 30 Z" fill="#a8d4f0" />
          <path d="M3 5 L24 3 V29 L3 27 Z" fill="#78b8e4" stroke="#3880b8" />
          <circle cx="14" cy="16" r="8" fill="#f09020" />
          <path d="M11 11 L19 16 L11 21 Z" fill="#fff" />
        </App32>
        <App32>
          <circle cx="16" cy="16" r="14" fill="#e86410" />
          <path d="M16 2 A14 14 0 0 1 30 16 Q30 21 27 25 Q29 14 22 9 Z" fill="#f8b828" />
          <path d="M10 3 A13 12 0 0 1 25 11 Q27 18 21 21 Q15 22 14 17 L18 15 L13 12 L14 9 L9 8 Z" fill="#2c5ca8" />
          <path d="M3 10 L5 6 L8 9 L13 11 L17 15 L12 18 Q14 23 22 22 Q16 28 8 24 Q3 19 3 10 Z" fill="#d84808" />
        </App32>
        <App32>
          <path d="M1 18 L10 13 L14 17 L8 23 Z" fill="#3890c0" />
          <path d="M10 13 L21 2 L15 24 L12 28 L8 23 Z" fill="#a02808" />
          <path d="M21 2 Q26 14 31 26 L25 22 L15 30 L12 28 Z" fill="#e87010" />
          <path d="M21 2 L23 20 L15 30 Z" fill="#f8b040" opacity=".7" />
        </App32>
        <App32>
          <path d="M5 15 Q4 8 10 6 Q16 2 22 5 Q29 8 28 14 L25 17 H16 L13 20 H9 Z" fill="#ffff00" stroke="#000" strokeWidth="1.3" />
          <path d="M8 9 Q11 12 13 8 T20 8 M9 14 Q13 10 16 13 T25 11 M18 6 Q20 9 24 8" stroke="#000" strokeWidth="1.1" />
          <circle cx="9" cy="20" r="3.5" fill="#900000" stroke="#000" />
          <path d="M16 18 L8 30 M16 18 L27 22" stroke="#000" strokeWidth="2.8" />
          <path d="M16 18 L8 30 M16 18 L27 22" stroke="#fff" strokeWidth="1.3" />
        </App32>
        <App32>
          <rect x="2" y="0" width="28" height="11" fill="#000" />
          <text x="16" y="9" fontSize="10" fontWeight="bold" fill="#ffff00" textAnchor="middle" textLength="26" lengthAdjust="spacingAndGlyphs" fontFamily='"DejaVu Sans", sans-serif'>zBus</text>
          <rect x="3" y="11" width="26" height="17" fill="#909090" stroke="#606060" />
          <path d="M0 20 H32 L26 14 V20 M0 23 H14 L6 19 M20 14 L14 20" stroke="#000" strokeWidth="3.2" />
          <path d="M0 20 H32 L26 14 V20 M0 23 H14 L6 19 M20 14 L14 20" stroke="#00ffff" strokeWidth="1.6" />
          <rect x="14" y="23" width="17" height="9" fill="#6000c0" />
          <text x="22.5" y="31" fontSize="9" fontWeight="bold" fill="#ff00ff" textAnchor="middle" fontFamily='"DejaVu Sans", sans-serif'>GB</text>
        </App32>
        <App32 mode="down">
          <path d="M6 1 H22 L25 5 L23 11 V23 L20 27 H9 L6 23 V11 L3 6 Z" fill="#b8b8b8" stroke="#000" strokeWidth="1.2" />
          <ellipse cx="3.5" cy="6" rx="2" ry="3" fill="#00e0e0" stroke="#000" />
          <ellipse cx="25" cy="6" rx="2" ry="3" fill="#00e0e0" stroke="#000" />
          <rect x="4" y="13" width="3" height="4" fill="#d000d0" />
          <rect x="4" y="19" width="3" height="4" fill="#0000d0" />
          <text x="14" y="8.5" fontSize="6.5" fontWeight="bold" fill="#000" textAnchor="middle" fontFamily='"DejaVu Sans", sans-serif'>VDS</text>
          <text x="20.5" y="24" fontSize="14" fontWeight="bold" fill="#ffff00" stroke="#c00000" strokeWidth="2" paintOrder="stroke" textAnchor="middle" fontFamily='"DejaVu Sans", sans-serif'>Ex</text>
          <path d="M21 31 H30 V23 Z" fill="#ffff00" stroke="#000" strokeWidth=".8" />
          <path d="M25 31 H30 V23 Z" fill="#ff00ff" />
        </App32>
        <App32>
          <ellipse cx="13" cy="10" rx="10" ry="9" fill="#fff" stroke="#c83040" strokeWidth="1.6" />
          <ellipse cx="18" cy="15" rx="10" ry="8" stroke="#d86070" />
          <path d="M8 6 L24 24 M12 3 L20 24" stroke="#8090a0" strokeWidth="2" />
          <ellipse cx="18.5" cy="27" rx="2.5" ry="3.6" stroke="#2878b8" strokeWidth="2" />
          <ellipse cx="27" cy="25" rx="3.4" ry="2.6" stroke="#2878b8" strokeWidth="2" />
        </App32>
        <App32 mode="up">
          <path d="M2 18 Q2 6 15 6 Q28 6 27 16 Q26 20 20 18 Q16 18 18 23 Q20 29 12 29 Q3 28 2 18 Z" fill="#b8dcf0" stroke="#5098c0" />
          <circle cx="8" cy="15" r="2.5" fill="#e04030" />
          <circle cx="14" cy="11" r="2.5" fill="#e8c020" />
          <circle cx="8" cy="22" r="2.3" fill="#3060c0" />
          <circle cx="21" cy="12" r="2.3" fill="#40a840" />
          <path d="M28 1 L31 4 L19 28 L15 31 L17 26 Z" fill="#d89040" stroke="#905818" strokeWidth=".8" />
        </App32>
      </div>
      <div className="grow" />
      <div className="mr-[2px] flex h-[37px] w-[214px] items-center border border-t-[#808080] border-r-white border-b-white border-l-[#808080] pl-[6px]">
        <div className="flex gap-[6px]">
          <svg width="18" height="18" viewBox="0 0 18 18">
            <path d="M2.5 2 H15.5 V11 L9 16.5 L2.5 11 Z" fill="#fff" stroke="#2078b8" strokeWidth="1.6" />
            <path d="M11.5 5 H6.5 V8 H11.5 V11 H6" fill="none" stroke="#2078b8" strokeWidth="1.6" />
          </svg>
          <svg width="18" height="18" viewBox="0 0 18 18">
            <rect x="1.5" y="2" width="15" height="10.5" fill="#101840" stroke="#000" />
            <path d="M4 6 L7 9 M9 4 V9 L11 6 V10 M13 4 V9" stroke="#d0e4ff" strokeWidth="1.4" fill="none" />
            <path d="M6 13 V16 M12 13 V16" stroke="#205080" strokeWidth="2.4" />
          </svg>
          <svg width="18" height="18" viewBox="0 0 18 18"><path d="M2.5 17 V2 M2.5 3 Q6 1.5 9 4 Q12 6 16 5 Q13 8 16 10.5 Q12 12 9 10 Q6 8.5 2.5 10" fill="#fff" stroke="#606060" /></svg>
          <svg width="18" height="18" viewBox="0 0 18 18" fill="#fff" stroke="#606060">
            <rect x="6" y="5" width="10.5" height="9" />
            <path d="M1.5 3 H6.5 V7 H5 V13 H3 V7 H1.5 Z M2.5 1 V3 M5.5 1 V3 M7 16.5 H16 M11.5 14 V16.5" />
          </svg>
          <svg width="18" height="18" viewBox="0 0 18 18" fill="none" stroke="#606060"><path d="M2 6.5 H5 L9 2.5 V15.5 L5 11.5 H2 Z" fill="#fff" /><path d="M11 6 Q13 9 11 12 M13 4 Q16.5 9 13 14" /></svg>
        </div>
        <div className="ml-[14px] flex w-[55px] flex-col items-center gap-1">
          <Label t="17:58" w={27} />
          <Label t="16/07/2016" w={55} />
        </div>
        <svg width="15" height="14" viewBox="0 0 15 14" className="ml-2">
          <rect x="0.5" y="0.5" width="14" height="10.5" fill="#2468c8" stroke="#184080" />
          <path d="M1 1 H14 L1 8 Z" fill="#60a8f0" />
          <rect x="0" y="11.5" width="15" height="2" fill="#404850" />
        </svg>
      </div>
    </div>
  );
}

/* ---------- page ---------- */

const SHEETS_A: SheetTab[] = [
  { t: "Sheet 0", w: 82, tw: 45, n: "M", body: "#808080", ink: "#fff" },
  { t: "Sheet 1", w: 86, tw: 45, n: "I", body: "#4a1030", ink: "#8090b8", on: true },
  { t: "Sheet 2", w: 82, tw: 45, n: "II", body: "#800080", ink: "#fff" },
];
const SHEETS_B: SheetTab[] = [
  { t: "Page0", w: 77, tw: 37, n: "1", body: "#4a1030", ink: "#8090b8", on: true },
  { t: "signal record", w: 110, tw: 74, n: "2", body: "#800080", ink: "#fff" },
  { t: "signal filtering", w: 117, tw: 79, n: "3", body: "#008080", ink: "#fff" },
  { t: "signal play", w: 100, tw: 62, n: "4", body: "#808000", ink: "#fff" },
];

export default function App() {
  return (
    <div className="flex h-[1440px] w-[5120px] overflow-hidden bg-[#d4d0c8] text-black [zoom:0.8]">
      <div className="flex h-[1440px] w-[2560px] shrink-0 flex-col">
        <Frame title="RPvdsEx - ContinuousPlay_zBusA.rcx" tw={208} tab="ContinuousPlay_zBusA.rcx" tabW={177} live active={false}>
          <div className="ml-1 flex h-[1129px] shrink-0 border-t border-l border-[#404040]">
            <PlayCircuit />
          </div>
          <div className="pl-1"><SheetTabs tabs={SHEETS_A} /></div>
          <OutputPane boxH="h-[65px]" />
        </Frame>
        <StatusRow />
        <Taskbar />
      </div>
      <div className="flex h-[1440px] w-[2560px] shrink-0 flex-col">
        <Frame title="RPvdsEx - ContinuousRecord_128channels.rcx" tw={261} tab="ContinuousRecord_128channels.rcx" tabW={222} live={false} active>
          <div className="ml-1 flex h-[1161px] shrink-0 border-t border-l border-[#404040]">
            <RecordCircuit />
            <div className="flex w-4 shrink-0 flex-col bg-[#eae8e4]">
              <RaisedKey cls="h-4 w-4"><path d="M2 7 H10 L6 2.5 Z" fill="#000" stroke="none" /></RaisedKey>
              <div className="mt-[7px] h-[402px] border-t border-r-2 border-b-2 border-l border-t-white border-r-[#606060] border-b-[#606060] border-l-white bg-[#d4d0c8]" />
              <div className="grow" />
              <RaisedKey cls="h-4 w-4"><Down /></RaisedKey>
            </div>
          </div>
          <div className="pl-1"><SheetTabs tabs={SHEETS_B} /></div>
          <OutputPane boxH="h-[76px]" />
        </Frame>
        <StatusRow />
      </div>
    </div>
  );
}
